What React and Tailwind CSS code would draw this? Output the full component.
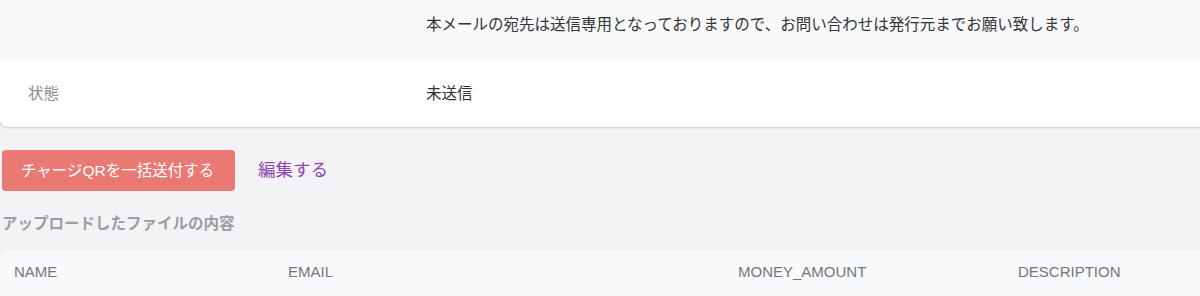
export default function App() {
  const font = { fontFamily: '"Liberation Sans", "Noto Sans CJK JP", sans-serif' }
  return (
    <div className="h-[296px] w-full overflow-hidden bg-[#f3f3f6]" style={font}>
      <div className="mr-[-12px] rounded-b-lg bg-white shadow-[0_1px_2px_rgba(0,0,0,0.18)]">
        <div className="flex h-[60px] items-start bg-[#f8f9fa] pt-[15px]">
          <div className="w-[426px] shrink-0 pl-[28px]"></div>
          <div className="text-[15.5px] leading-5 text-[#333338]">
            本メールの宛先は送信専用となっておりますので、お問い合わせは発行元までお願い致します。
          </div>
        </div>
        <div className="flex h-[67px] items-center">
          <div className="w-[426px] shrink-0 pl-[28px] text-[15.5px] text-[#8a8d96]">状態</div>
          <div className="text-[15.5px] text-[#333338]">未送信</div>
        </div>
      </div>

      <div className="mt-[23px] flex items-center pl-[2px]">
        <button className="h-[41px] w-[233px] rounded-[4px] bg-[#ea7873] pl-[19px] text-left text-[15.5px] text-white">
          チャージQRを一括送付する
        </button>
        <a className="ml-[23px] text-[17.5px] text-[#8e44ad]">編集する</a>
      </div>

      <div className="mt-[22px] pl-[2px] text-[15.5px] font-bold leading-[22px] text-[#9c9ca4]">
        アップロードしたファイルの内容
      </div>

      <div className="mr-[-12px] mt-[15px] flex h-[48px] items-center rounded-tl-lg bg-[#f8f9fa] pb-[4px] text-[15px] text-[#74767f] shadow-[0_0_1px_rgba(0,0,0,0.12)]">
        <div className="w-[288px] shrink-0 pl-[14px]">NAME</div>
        <div className="w-[450px] shrink-0">EMAIL</div>
        <div className="w-[280px] shrink-0">MONEY_AMOUNT</div>
        <div>DESCRIPTION</div>
      </div>
    </div>
  )
}
